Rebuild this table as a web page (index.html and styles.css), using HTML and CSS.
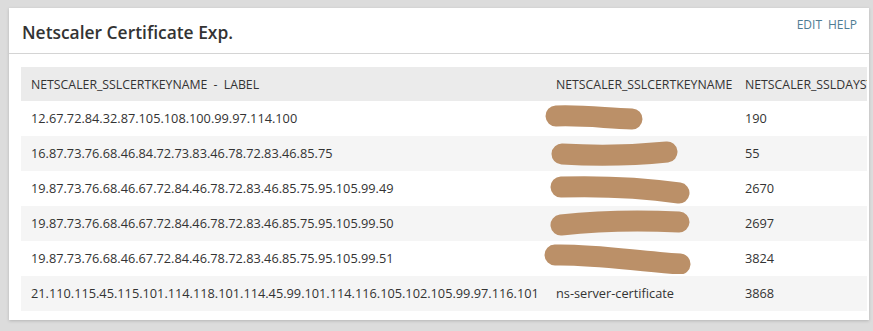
FILE: index.html
```html
<!DOCTYPE html>
<html>
<head>
<meta charset="utf-8">
<link rel="stylesheet" href="styles.css">
</head>
<body>
<div class="card">
  <div class="card-head">
    <h1 class="title">Netscaler Certificate Exp.</h1>
    <div class="actions"><a class="act">EDIT</a><a class="act">HELP</a></div>
  </div>
  <div class="table-wrap">
    <table class="grid">
      <thead>
        <tr><th class="c1">NETSCALER_SSLCERTKEYNAME - LABEL</th><th class="c2">NETSCALER_SSLCERTKEYNAME</th><th class="c3">NETSCALER_SSLDAYSTOEXPIRE</th></tr>
      </thead>
      <tbody>
        <tr><td>12.67.72.84.32.87.105.108.100.99.97.114.100</td><td class="red-cell"><svg class="redact" width="110" height="28" viewBox="0 0 110 28"><path d="M12 12 C40 11 60 14 88 15" /></svg></td><td>190</td></tr>
        <tr><td>16.87.73.76.68.46.84.72.73.83.46.78.72.83.46.85.75</td><td class="red-cell"><svg class="redact r2" width="140" height="28" viewBox="0 0 140 28"><path d="M15 15 C50 17 90 16 120 13" /></svg></td><td>55</td></tr>
        <tr><td>19.87.73.76.68.46.67.72.84.46.78.72.83.46.85.75.95.105.99.49</td><td class="red-cell"><svg class="redact r2" width="152" height="30" viewBox="0 0 152 30"><path d="M14 13 C50 12 90 13 132 19" /></svg></td><td>2670</td></tr>
        <tr><td>19.87.73.76.68.46.67.72.84.46.78.72.83.46.85.75.95.105.99.50</td><td class="red-cell"><svg class="redact r2" width="152" height="28" viewBox="0 0 152 28"><path d="M14 16 C50 12 90 11 132 13" /></svg></td><td>2697</td></tr>
        <tr><td>19.87.73.76.68.46.67.72.84.46.78.72.83.46.85.75.95.105.99.51</td><td class="red-cell"><svg class="redact" width="156" height="30" viewBox="0 0 156 30"><path d="M11 11 C50 10 90 17 136 20" /></svg></td><td>3824</td></tr>
        <tr><td>21.110.115.45.115.101.114.118.101.114.45.99.101.114.116.105.102.105.99.97.116.101</td><td>ns-server-certificate</td><td>3868</td></tr>
      </tbody>
    </table>
  </div>
</div>
</body>
</html>
```

FILE: styles.css
```css
html, body {
  margin: 0;
  padding: 0;
}
body {
  background: #dcdcdc;
  font-family: "Open Sans", "Noto Sans", sans-serif;
  color: #333;
  padding: 8px 4px 0 9px;
  height: 331px;
  box-sizing: border-box;
  overflow: hidden;
}
.card {
  background: #fff;
  width: 860px;
  height: 312px;
  box-shadow: 0 1px 3px rgba(0,0,0,0.18);
  display: flex;
  flex-direction: column;
}
.card-head {
  height: 45px;
  border-bottom: 1px solid #d4d4d4;
  display: flex;
  align-items: flex-start;
  justify-content: space-between;
  padding: 0 12px 0 13px;
}
.title {
  margin: 13px 0 0 0;
  font-size: 17.4px;
  font-weight: 600;
  color: #333;
  line-height: 22px;
}
.actions {
  margin-top: 9px;
  display: flex;
  gap: 6px;
  font-size: 12px;
  line-height: 16px;
}
.act {
  color: #4f7c93;
  text-decoration: none;
}
.table-wrap {
  margin: 13px 2px 0 12px;
  overflow: hidden;
}
.grid {
  border-collapse: collapse;
  font-size: 12.75px;
  white-space: nowrap;
  width: 900px;
  table-layout: fixed;
}
.grid th {
  background: #ebebeb;
  font-weight: 400;
  font-size: 12.3px;
  text-align: left;
  padding: 0 10px;
  height: 34px;
  color: #333;
  overflow: hidden;
}
.c1 { width: 505px; word-spacing: 3px; }
.c2 { width: 169px; }
.c3 { width: 206px; }
.grid td {
  padding: 0 10px;
  height: 35px;
  line-height: 17px;
}
.grid tbody tr:nth-child(even) td {
  background: #f5f5f5;
}
.red-cell {
  position: relative;
}
.redact {
  position: absolute;
  left: -2px;
  top: 3px;
}
.redact.r2 { left: 1px; }
.redact path {
  fill: none;
  stroke: #bb9068;
  stroke-width: 21;
  stroke-linecap: round;
}
```
